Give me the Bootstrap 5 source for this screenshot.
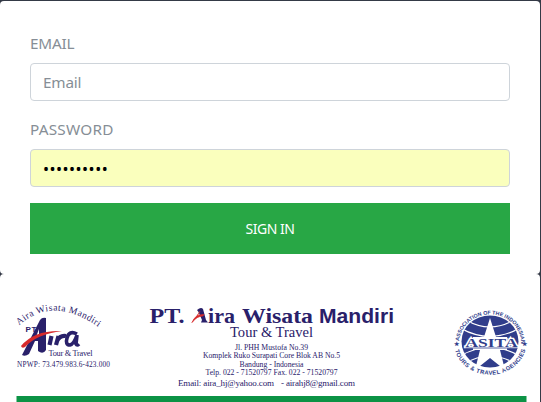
<!DOCTYPE html>
<html lang="en">
<head>
<meta charset="utf-8">
<title>Sign in</title>
<link href="https://cdn.jsdelivr.net/npm/bootstrap@5.3.0/dist/css/bootstrap.min.css" rel="stylesheet">
<style>
body{background:#343a46;font-family:"Noto Sans",sans-serif;overflow:hidden}
.login-page{width:540px;height:402px;padding-top:1px}
.login-panel{height:273px;border:0;border-radius:4px;padding:30px 30px 0}
.field-label{font-size:15.3px;line-height:24px;color:#868e96;margin-bottom:8px;display:block;width:max-content}
.email-label{letter-spacing:-.2px}
.password-label{letter-spacing:.22px}
.form-control{height:38px;border-color:#ced4da;border-radius:4px;padding:6px 12px;font-size:15.3px;color:#000}
.form-control::placeholder{color:#868e96;letter-spacing:-.2px}
.saved-field,.saved-field:focus{background:#faffbd;font-size:16px;letter-spacing:.5px;padding-top:7px}
.sign-btn{height:51px;border:0;border-radius:0;background:#28a745;font-size:14px;letter-spacing:-.45px}
.letterhead{height:128px}
</style>
<script src="https://cdn.jsdelivr.net/npm/bootstrap@5.3.0/dist/js/bootstrap.bundle.min.js"></script>
</head>
<body>
<main class="login-page d-flex flex-column">
<form class="login-panel card">
  <div class="mb-3">
    <label class="field-label email-label" for="email">EMAIL</label>
    <input class="form-control" id="email" type="email" placeholder="Email">
  </div>
  <div class="mb-3">
    <label class="field-label password-label" for="password">PASSWORD</label>
    <input class="form-control saved-field" id="password" type="password" value="abcdefghij">
  </div>
  <button class="btn btn-success sign-btn w-100" type="button">SIGN IN</button>
</form>
<footer class="letterhead bg-white rounded-top-1">
<svg class="d-block" width="540" height="128" viewBox="0 274 540 128" font-family="Liberation Serif, serif" fill="#29206a">
  <defs>
    <path id="airaArc" d="M19 325.500 Q54 294 101 329"/>
    <path id="ringTop" d="M459.200 341 A31 29 0 0 1 521 341 L521 347"/>
    <path id="ringBottom" d="M455 350.200 A36 31.500 0 0 0 525.200 350.200 L526 346"/>
    <clipPath id="globeClip"><ellipse cx="490" cy="341.500" rx="28.500" ry="26"/></clipPath>
  </defs>
  <!-- Agency logo -->
  <text font-size="9.500"><textPath href="#airaArc" textLength="87">Aira Wisata Mandiri</textPath></text>
  <text x="25.500" y="331.500" font-family="Liberation Sans, sans-serif" font-weight="bold" font-size="8" textLength="11">PT</text>
  <path d="M22 355 L40 320 Q42 317 46 318 L46 350 Q43 355 38 351 L38 341 H35 L29 354 Q25 357 22 355Z M39 329 L36 337 H39Z" fill-rule="evenodd"/>
  <path d="M51.500 336 L49.500 345 M56 345 L58.500 336 M57 341 Q60 335 66 336" fill="none" stroke="#29206a" stroke-width="4.200"/>
  <path d="M77 334 Q69 330 67 338 Q65 345 70 345 Q74 344 77 335 L76 344 Q77 346 79 344" fill="none" stroke="#29206a" stroke-width="3.600"/>
  <path d="M21 346 Q34 330 62 331 Q37 334 25 347 Q22 349 21 346Z" fill="#d72a2c"/>
  <text x="48.500" y="355.500" font-size="8.300" textLength="44">Tour &amp; Travel</text>
  <text x="17" y="367" font-size="7.300" textLength="93">NPWP: 73.479.983.6-423.000</text>
  <!-- Company name and address -->
  <g font-weight="bold" font-size="22">
    <text x="149.500" y="322.500" textLength="35" lengthAdjust="spacingAndGlyphs">PT.</text>
    <text x="208" y="322.500" textLength="27" lengthAdjust="spacingAndGlyphs">ira</text>
    <text x="242" y="322.500" textLength="71" lengthAdjust="spacingAndGlyphs">Wisata</text>
    <text x="319" y="322.500" font-size="20" font-family="Liberation Sans, sans-serif" textLength="75" lengthAdjust="spacingAndGlyphs">Mandiri</text>
  </g>
  <path d="M197 310 Q201 306.500 203 309 L206 320 L208 322.500 H201 L202 320 L198.500 312Z"/>
  <path d="M200 311 Q198 316 192 322.500 Q195 314 204 314.500 L203 316 Q197 316 192 322.500" fill="#d72a2c" stroke="#d72a2c" stroke-width=".6"/>
  <text x="230" y="336.500" font-size="14" textLength="83" lengthAdjust="spacingAndGlyphs">Tour &amp; Travel</text>
  <g font-size="7.700">
    <text x="235" y="350" textLength="73">Jl. PHH Mustofa No.39</text>
    <text x="203" y="358.300" textLength="137">Komplek Ruko Surapati Core Blok AB No.5</text>
    <text x="239.500" y="366.500" textLength="64">Bandung - Indonesia</text>
    <text x="205.500" y="374.500" textLength="132">Telp. 022 - 71520797 Fax. 022 - 71520797</text>
  </g>
  <text x="178" y="385.500" font-size="9" textLength="96">Email: aira_hj@yahoo.com</text>
  <text x="281" y="385.500" font-size="9" textLength="74">- airahj8@gmail.com</text>
  <!-- Association seal -->
  <g fill="#303d8b">
    <g font-family="Liberation Sans, sans-serif" font-weight="bold" font-size="5.300">
      <text><textPath href="#ringTop" textLength="92">ASSOCIATION OF THE INDONESIAN</textPath></text>
      <text><textPath href="#ringBottom" textLength="92" font-size="5.900">TOURS &amp; TRAVEL AGENCIES</textPath></text>
      <text x="453.500" y="346" font-size="6">★</text><text x="521.500" y="346" font-size="6">★</text>
    </g>
    <ellipse cx="490" cy="341.500" rx="28.500" ry="26"/>
    <g clip-path="url(#globeClip)" fill="none" stroke="#fff" stroke-width="1.200">
      <path d="M460 328 Q490 345 520 328 M466 320 Q490 334 514 320 M460 356 Q490 339 520 356 M464 364 Q490 348 516 364"/>
    </g>
    <path d="M490 318 L496 337 H507 V350 H500 L505 370 L490 358 L475 370 L480 350 H473 V337 H484Z" fill="#fff"/>
    <text x="465.500" y="347.300" font-weight="bold" font-size="12.500" textLength="52" lengthAdjust="spacingAndGlyphs" stroke="#fff" stroke-width="2.500" paint-order="stroke">ASITA</text>
    <path d="M465.500 348 H517.500" stroke="#303d8b" stroke-width=".8"/>
  </g>
  <rect x="16.500" y="396" width="510" height="6" fill="#0c9345"/>
</svg>
</footer>
</main>
</body>
</html>
